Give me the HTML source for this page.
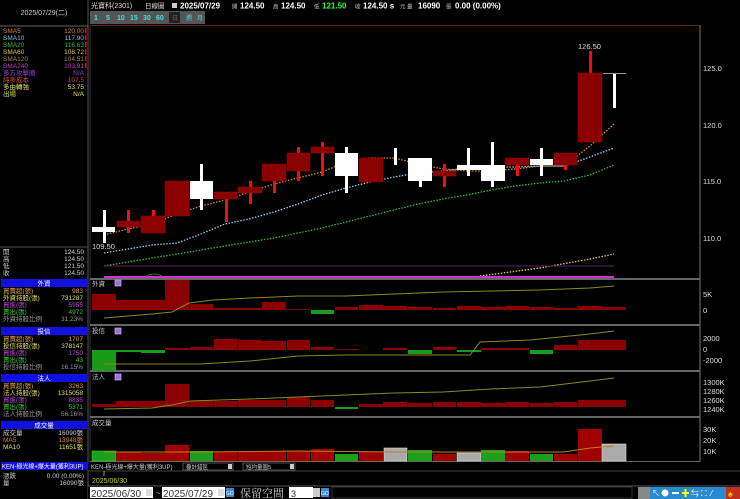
<!DOCTYPE html>
<html><head><meta charset="utf-8"><style>
body{margin:0;background:#000;width:740px;height:499px;overflow:hidden;font-family:"Liberation Sans","Noto Sans CJK TC",sans-serif}
svg{position:absolute;left:0;top:0}
</style></head><body>
<svg width="740" height="499" xmlns="http://www.w3.org/2000/svg" font-family="Liberation Sans, Noto Sans CJK TC, sans-serif">
<rect width="740" height="499" fill="#000"/>
<!-- left panel -->
<rect x="0" y="0" width="88" height="499" fill="#000"/>
<line x1="88" y1="0" x2="88" y2="499" stroke="#555"/>
<text x="44" y="15" fill="#ccc" font-size="7" text-anchor="middle">2025/07/29(二)</text>
<line x1="0" y1="26" x2="88" y2="26" stroke="#666"/>
<g font-size="6.5">
<text x="3" y="33" fill="#e08030">SMA5</text><text x="84" y="33" fill="#e08030" text-anchor="end">120.00</text>
<text x="3" y="40" fill="#80c0e0">SMA10</text><text x="84" y="40" fill="#80c0e0" text-anchor="end">117.90</text>
<text x="3" y="47" fill="#30c030">SMA20</text><text x="84" y="47" fill="#30c030" text-anchor="end">116.63</text>
<text x="3" y="54" fill="#e0d040">SMA60</text><text x="84" y="54" fill="#e0d040" text-anchor="end">108.72</text>
<text x="3" y="61" fill="#b08060">SMA120</text><text x="84" y="61" fill="#b08060" text-anchor="end">104.51</text>
<text x="3" y="68" fill="#c040c0">SMA240</text><text x="84" y="68" fill="#c040c0" text-anchor="end">103.91</text>
<text x="3" y="75" fill="#9040e0">多方攻擊圈</text><text x="84" y="75" fill="#9040e0" text-anchor="end">N/A</text>
<text x="3" y="82" fill="#e04040">純多成本</text><text x="84" y="82" fill="#e04040" text-anchor="end">107.5</text>
<text x="3" y="89" fill="#e0e060">多由轉強</text><text x="84" y="89" fill="#e0e060" text-anchor="end">53.75</text>
<text x="3" y="96" fill="#e0e060">出場</text><text x="84" y="96" fill="#e0e060" text-anchor="end">N/A</text>
</g>
<g fill="#f00"><rect x="85" y="28" width="1.5" height="5"/><rect x="85" y="35" width="1.5" height="5"/><rect x="85" y="42" width="1.5" height="5"/><rect x="85" y="49" width="1.5" height="5"/><rect x="85" y="56" width="1.5" height="5"/><rect x="85" y="63" width="1.5" height="5"/></g>
<line x1="0" y1="247" x2="88" y2="247" stroke="#555"/>
<g font-size="6.5" fill="#ccc">
<text x="3" y="254">開</text><text x="84" y="254" text-anchor="end">124.50</text>
<text x="3" y="261">高</text><text x="84" y="261" text-anchor="end">124.50</text>
<text x="3" y="268">低</text><text x="84" y="268" text-anchor="end">121.50</text>
<text x="3" y="275">收</text><text x="84" y="275" text-anchor="end">124.50</text>
</g>
<g font-size="6.5">
<rect x="1" y="279" width="86" height="8" fill="#1010e0"/><text x="44" y="285.5" fill="#fff" text-anchor="middle">外資</text>
<text x="3" y="293" fill="#e0a040">買賣超(張)</text><text x="83" y="293" fill="#e0a040" text-anchor="end">983</text>
<text x="3" y="300" fill="#e0e060">外資持股(張)</text><text x="83" y="300" fill="#e0e060" text-anchor="end">731287</text>
<text x="3" y="307" fill="#c040e0">買進(張)</text><text x="83" y="307" fill="#c040e0" text-anchor="end">5955</text>
<text x="3" y="314" fill="#30d030">賣出(張)</text><text x="83" y="314" fill="#30d030" text-anchor="end">4972</text>
<text x="3" y="321" fill="#999">外資持股比例</text><text x="83" y="321" fill="#999" text-anchor="end">31.23%</text>
<rect x="1" y="327" width="86" height="8" fill="#1010e0"/><text x="44" y="333.5" fill="#fff" text-anchor="middle">投信</text>
<text x="3" y="341" fill="#e0a040">買賣超(張)</text><text x="83" y="341" fill="#e0a040" text-anchor="end">1707</text>
<text x="3" y="348" fill="#e0e060">投信持股(張)</text><text x="83" y="348" fill="#e0e060" text-anchor="end">378147</text>
<text x="3" y="355" fill="#c040e0">買進(張)</text><text x="83" y="355" fill="#c040e0" text-anchor="end">1750</text>
<text x="3" y="362" fill="#30d030">賣出(張)</text><text x="83" y="362" fill="#30d030" text-anchor="end">43</text>
<text x="3" y="369" fill="#999">投信持股比例</text><text x="83" y="369" fill="#999" text-anchor="end">16.15%</text>
<rect x="1" y="374" width="86" height="8" fill="#1010e0"/><text x="44" y="380.5" fill="#fff" text-anchor="middle">法人</text>
<text x="3" y="388" fill="#e0a040">買賣超(張)</text><text x="83" y="388" fill="#e0a040" text-anchor="end">3263</text>
<text x="3" y="395" fill="#e0e060">法人持股(張)</text><text x="83" y="395" fill="#e0e060" text-anchor="end">1315058</text>
<text x="3" y="402" fill="#c040e0">買進(張)</text><text x="83" y="402" fill="#c040e0" text-anchor="end">8835</text>
<text x="3" y="409" fill="#30d030">賣出(張)</text><text x="83" y="409" fill="#30d030" text-anchor="end">5371</text>
<text x="3" y="416" fill="#999">法人持股比例</text><text x="83" y="416" fill="#999" text-anchor="end">56.16%</text>
<rect x="1" y="421" width="86" height="8" fill="#1010e0"/><text x="44" y="427.5" fill="#fff" text-anchor="middle">成交量</text>
<text x="3" y="435" fill="#ccc">成交量</text><text x="83" y="435" fill="#ccc" text-anchor="end">16090張</text>
<text x="3" y="442" fill="#e08030">MA5</text><text x="83" y="442" fill="#e08030" text-anchor="end">13948張</text>
<text x="3" y="449" fill="#e0e060">MA10</text><text x="83" y="449" fill="#e0e060" text-anchor="end">11651張</text>
<rect x="1" y="462" width="86" height="8" fill="#1010e0"/><text x="2" y="468.5" fill="#fff" font-size="6">KEN-極光線+爆大量(獲利3UP)</text>
<text x="3" y="478" fill="#ccc">漲跌</text><text x="84" y="478" fill="#ccc" text-anchor="end">0.00 (0.00%)</text>
<text x="3" y="485" fill="#ccc">量</text><text x="84" y="485" fill="#ccc" text-anchor="end">16090張</text>
</g>
<!-- top bar -->
<text x="91" y="8" fill="#ddd" font-size="7">光寶科(2301)</text>
<text x="145" y="8" fill="#ddd" font-size="6.5">日線圖</text>
<rect x="172" y="3" width="5" height="5" fill="#ccc"/>
<g font-size="8" font-weight="bold">
<text x="180" y="8.5" fill="#fff">2025/07/29</text>
<text x="232" y="8.5" fill="#ccc" font-size="5.5" font-weight="normal">開</text><text x="240" y="8.5" fill="#fff">124.50</text>
<text x="273" y="8.5" fill="#ccc" font-size="5.5" font-weight="normal">高</text><text x="281" y="8.5" fill="#fff">124.50</text>
<text x="314" y="8.5" fill="#ccc" font-size="5.5" font-weight="normal">低</text><text x="322" y="8.5" fill="#3f3">121.50</text>
<text x="355" y="8.5" fill="#ccc" font-size="5.5" font-weight="normal">收</text><text x="363" y="8.5" fill="#fff">124.50 s</text>
<text x="400" y="8.5" fill="#ccc" font-size="5.5" font-weight="normal">元  量</text><text x="418" y="8.5" fill="#fff">16090</text>
<text x="446" y="8.5" fill="#ccc" font-size="5.5" font-weight="normal">張</text><text x="455" y="8.5" fill="#fff">0.00 (0.00%)</text>
</g>
<rect x="90" y="11" width="115" height="13" fill="#555"/>
<g font-size="7" fill="#40e0e0" font-weight="bold">
<text x="94" y="20">1</text><text x="106" y="20">5</text><text x="117" y="20">10</text><text x="130" y="20">15</text><text x="143" y="20">30</text><text x="156" y="20">60</text>
</g>
<rect x="169" y="12" width="11" height="11" fill="#222"/>
<g font-size="6" fill="#40e0e0"><text x="172" y="20" fill="#666">日</text><text x="186" y="20">週</text><text x="197" y="20">月</text></g>
<!-- chart frame -->
<rect x="90" y="25" width="610" height="437" fill="#000"/>
<line x1="90" y1="25.5" x2="700" y2="25.5" stroke="#602030"/>
<line x1="700" y1="25" x2="700" y2="470" stroke="#777"/>
<line x1="90" y1="25" x2="90" y2="470" stroke="#333"/>
<g stroke="#666" stroke-width="2">
<line x1="90" y1="279" x2="700" y2="279"/><line x1="90" y1="325" x2="700" y2="325"/><line x1="90" y1="371" x2="700" y2="371"/><line x1="90" y1="417" x2="700" y2="417"/><line x1="90" y1="462" x2="700" y2="462"/>
</g>
<!-- axis labels -->
<g fill="#ddd" font-size="7.5">
<text x="703" y="71">125.0</text><text x="703" y="128">120.0</text><text x="703" y="184">115.0</text><text x="703" y="241">110.0</text>
<text x="703" y="297">5K</text><text x="703" y="313">0</text>
<text x="703" y="341">2000</text><text x="703" y="352">0</text><text x="703" y="363">-2000</text>
<text x="703" y="385">1300K</text><text x="703" y="394">1280K</text><text x="703" y="403">1260K</text><text x="703" y="412">1240K</text>
<text x="703" y="432">30K</text><text x="703" y="443">20K</text><text x="703" y="454">10K</text><text x="703" y="470">5</text>
</g>
<!-- MA lines -->
<polyline fill="none" stroke="#e08a30" stroke-width="1.3" stroke-dasharray="1.5,1.5" points="104,235 128,229 152,224 177,214 201,206 225,200 249,192 274,184 298,178 322,172 346,162 370,158 394,158 418,164 443,169 467,171 491,171 515,169 540,166 564,166 590,146 614,124"/>
<polyline fill="none" stroke="#90d0f0" stroke-width="1.3" stroke-dasharray="1.5,1.5" points="104,253 128,249 152,245 177,243 201,234 225,224 249,219 274,212 298,204 322,195 346,188 370,182 394,177 418,173 443,171 467,168 491,167 515,167 540,166 564,166 590,157 614,148"/>
<polyline fill="none" stroke="#30c030" stroke-width="1.3" stroke-dasharray="1.5,1.5" points="104,266 128,262 152,258 177,254 201,250 225,246 249,242 274,238 298,233 322,228 346,222 370,216 394,210 418,204 443,199 467,195 491,190 515,186 540,183 564,181 590,175 614,165"/>
<polyline fill="none" stroke="#e0d040" stroke-width="1.3" stroke-dasharray="1.5,1.5" points="480,276 540,268 590,259 614,254"/>
<line x1="104" y1="266" x2="614" y2="266" stroke="#602060" stroke-width="1"/>
<line x1="104" y1="277" x2="614" y2="277" stroke="#d030d0" stroke-width="2"/>
<path d="M146,276 Q154,272 162,276" stroke="#2a6a3a" fill="none"/>
<!-- candles -->
<g fill="#fff">
<rect x="103" y="210" width="3" height="33"/><rect x="92" y="227" width="23" height="5"/>
<rect x="200" y="164" width="3" height="46"/><rect x="190" y="181" width="23" height="18"/>
<rect x="345" y="147" width="3" height="46"/><rect x="335" y="153" width="23" height="23"/>
<rect x="394" y="148" width="3" height="17"/>
<rect x="419" y="165" width="3" height="22"/><rect x="408" y="158" width="24" height="23"/>
<rect x="467" y="148" width="3" height="28"/><rect x="457" y="165" width="24" height="5"/>
<rect x="491" y="142" width="3" height="45"/><rect x="481" y="165" width="24" height="16"/>
<rect x="540" y="148" width="3" height="28"/><rect x="530" y="159" width="23" height="6"/>
<rect x="613" y="73" width="3" height="35"/>
</g>
<line x1="603" y1="73.5" x2="626" y2="73.5" stroke="#999"/>
<g fill="#f01010">
<rect x="127" y="210" width="3" height="23"/><rect x="152" y="210" width="3" height="6"/>
<rect x="225" y="199" width="3" height="23"/><rect x="249" y="181" width="3" height="23"/>
<rect x="273" y="181" width="3" height="12"/><rect x="297" y="147" width="3" height="34"/>
<rect x="321" y="142" width="3" height="34"/><rect x="370" y="182" width="3" height="0"/>
<rect x="443" y="164" width="3" height="23"/><rect x="516" y="165" width="3" height="11"/>
<rect x="564" y="165" width="3" height="5"/><rect x="589" y="51" width="3" height="22"/>
</g>
<g fill="#8b0000" stroke="#a00000" stroke-width="0.5">
<rect x="117" y="221" width="23" height="6"/><rect x="141" y="216" width="24" height="17"/>
<rect x="165" y="181" width="24" height="35"/><rect x="214" y="192" width="23" height="7"/>
<rect x="238" y="187" width="24" height="6"/><rect x="262" y="164" width="24" height="17"/>
<rect x="287" y="153" width="23" height="18"/><rect x="311" y="147" width="23" height="6"/>
<rect x="359" y="158" width="24" height="24"/><rect x="433" y="171" width="23" height="5"/>
<rect x="505" y="158" width="24" height="7"/><rect x="554" y="153" width="23" height="12"/>
<rect x="578" y="73" width="24" height="69"/>
</g>
<text x="92" y="249" fill="#ddd" font-size="7.5">109.50</text>
<text x="578" y="49" fill="#ddd" font-size="7.5">126.50</text>
<!-- sub panel labels -->
<g font-size="6.5" fill="#ccc"><text x="92" y="286">外資</text><text x="92" y="333">投信</text><text x="92" y="379">法人</text><text x="92" y="425">成交量</text></g>
<g fill="#a070e0" stroke="#e0c0ff" stroke-width="0.6"><rect x="115" y="280" width="6" height="6"/><rect x="115" y="328" width="6" height="6"/><rect x="115" y="374" width="6" height="6"/></g>
<!-- 外資 bars zero 310 -->
<g fill="#8b0000">
<rect x="92" y="294" width="24" height="16"/><rect x="116" y="300" width="25" height="10"/><rect x="141" y="300" width="24" height="10"/><rect x="165" y="280" width="24" height="30"/><rect x="190" y="304" width="23" height="6"/><rect x="214" y="308" width="23" height="2"/><rect x="238" y="308" width="24" height="2"/><rect x="262" y="302" width="24" height="8"/><rect x="287" y="309" width="23" height="1"/><rect x="335" y="307" width="23" height="3"/><rect x="359" y="305" width="24" height="5"/><rect x="383" y="306" width="24" height="4"/><rect x="408" y="307" width="24" height="3"/><rect x="433" y="308" width="23" height="2"/><rect x="457" y="306" width="24" height="4"/><rect x="481" y="307" width="24" height="3"/><rect x="505" y="306" width="24" height="4"/><rect x="530" y="307" width="23" height="3"/><rect x="554" y="308" width="23" height="2"/><rect x="578" y="306" width="24" height="4"/><rect x="602" y="307" width="24" height="3"/>
</g>
<rect x="311" y="310" width="23" height="4" fill="#1a9a1a"/>
<polyline fill="none" stroke="#8a8a20" points="104,318 128,316 152,314 172,312 189,303 213,300 250,298 298,296 346,296 394,294 443,292 491,291 540,290 590,288 614,286"/>
<!-- 投信 zero 350 -->
<g fill="#1a9a1a"><rect x="92" y="350" width="24" height="21"/><rect x="116" y="350" width="25" height="2"/><rect x="141" y="350" width="24" height="3"/><rect x="408" y="350" width="24" height="4"/><rect x="530" y="350" width="23" height="4"/><rect x="457" y="350" width="24" height="2"/></g>
<g fill="#8b0000"><rect x="165" y="348" width="24" height="2"/><rect x="190" y="347" width="23" height="3"/><rect x="214" y="339" width="23" height="11"/><rect x="238" y="340" width="24" height="10"/><rect x="262" y="341" width="24" height="9"/><rect x="287" y="340" width="23" height="10"/><rect x="311" y="347" width="23" height="3"/><rect x="335" y="349" width="23" height="1"/><rect x="383" y="348" width="24" height="2"/><rect x="433" y="347" width="23" height="3"/><rect x="481" y="348" width="24" height="2"/><rect x="505" y="348" width="24" height="2"/><rect x="554" y="345" width="23" height="5"/><rect x="578" y="340" width="24" height="10"/><rect x="602" y="340" width="24" height="10"/></g>
<polyline fill="none" stroke="#8a8a20" points="104,364 200,364 250,361 298,356 346,355 394,355 443,355 470,355 480,342 530,340 590,334 614,331"/>
<!-- 法人 zero 407 -->
<g fill="#8b0000"><rect x="92" y="404" width="24" height="3"/><rect x="116" y="401" width="25" height="6"/><rect x="141" y="401" width="24" height="6"/><rect x="165" y="384" width="24" height="23"/><rect x="190" y="401" width="23" height="6"/><rect x="214" y="401" width="23" height="6"/><rect x="238" y="400" width="24" height="7"/><rect x="262" y="400" width="24" height="7"/><rect x="287" y="397" width="23" height="10"/><rect x="311" y="400" width="23" height="7"/><rect x="359" y="404" width="24" height="3"/><rect x="383" y="402" width="24" height="5"/><rect x="408" y="403" width="24" height="4"/><rect x="433" y="402" width="23" height="5"/><rect x="457" y="402" width="24" height="5"/><rect x="481" y="403" width="24" height="4"/><rect x="505" y="402" width="24" height="5"/><rect x="530" y="403" width="23" height="4"/><rect x="554" y="402" width="23" height="5"/><rect x="578" y="400" width="24" height="7"/><rect x="602" y="400" width="24" height="7"/></g>
<rect x="335" y="407" width="23" height="2" fill="#1a9a1a"/>
<polyline fill="none" stroke="#8a8a20" points="104,409 152,408 172,405 190,401 250,399 298,397 346,395 394,393 443,392 491,389 540,387 590,381 614,378"/>
<!-- volume base 461 -->
<g stroke-width="0.6">
<rect x="92" y="451" width="24" height="10" fill="#1aa01a" stroke="#3c3"/>
<rect x="116" y="452" width="25" height="9" fill="#a00000"/>
<rect x="141" y="453" width="24" height="8" fill="#a00000"/>
<rect x="165" y="445" width="24" height="16" fill="#a00000"/>
<rect x="190" y="451" width="23" height="10" fill="#1aa01a"/>
<rect x="214" y="452" width="23" height="9" fill="#a00000"/>
<rect x="238" y="452" width="24" height="9" fill="#a00000"/>
<rect x="262" y="451" width="24" height="10" fill="#a00000"/>
<rect x="287" y="451" width="23" height="10" fill="#a00000"/>
<rect x="311" y="449" width="23" height="12" fill="#a00000"/>
<rect x="335" y="454" width="23" height="7" fill="#1aa01a"/>
<rect x="359" y="452" width="24" height="9" fill="#a00000"/>
<rect x="384" y="448" width="23" height="13" fill="#aaa" stroke="#ddd"/>
<rect x="408" y="450" width="24" height="11" fill="#1aa01a"/>
<rect x="433" y="454" width="23" height="7" fill="#a00000"/>
<rect x="457" y="453" width="24" height="8" fill="#aaa" stroke="#ddd"/>
<rect x="481" y="450" width="24" height="11" fill="#1aa01a"/>
<rect x="505" y="451" width="24" height="10" fill="#a00000"/>
<rect x="530" y="454" width="23" height="7" fill="#1aa01a"/>
<rect x="554" y="454" width="23" height="7" fill="#a00000"/>
<rect x="578" y="429" width="24" height="32" fill="#a00000"/>
<rect x="602" y="444" width="24" height="17" fill="#aaa" stroke="#ddd"/>
</g>
<polyline fill="none" stroke="#c08020" points="104,452 200,452 298,451 394,452 491,452 564,452 590,448 614,446"/>
<!-- bottom indicator row -->
<rect x="88" y="462" width="652" height="9" fill="#000"/>
<text x="91" y="469" fill="#ccc" font-size="6">KEN-極光線+爆大量(獲利3UP)</text>
<rect x="183" y="463" width="50" height="7" fill="#000" stroke="#888" stroke-width="0.6"/><text x="186" y="469" fill="#ccc" font-size="5.5">疊計錯區</text><rect x="228" y="464" width="4" height="5" fill="#ccc"/>
<rect x="243" y="463" width="52" height="7" fill="#000" stroke="#888" stroke-width="0.6"/><text x="246" y="469" fill="#ccc" font-size="5.5">短均量圖5</text><rect x="290" y="464" width="4" height="5" fill="#ccc"/>
<line x1="88" y1="471" x2="740" y2="471" stroke="#444"/>
<line x1="104" y1="471" x2="104" y2="476" stroke="#aa0"/>
<text x="92" y="483" fill="#cc0" font-size="7">2025/06/30</text>
<!-- controls -->
<rect x="88" y="486" width="652" height="13" fill="#000"/>
<line x1="88" y1="486" x2="740" y2="486" stroke="#555"/>
<rect x="90" y="487" width="63" height="11" fill="#fff"/><text x="91" y="497" fill="#333" font-size="10">2025/06/30</text><rect x="146" y="489" width="6" height="7" fill="#ddd"/>
<text x="156" y="496" fill="#ccc" font-size="8">~</text>
<rect x="162" y="487" width="63" height="11" fill="#fff"/><text x="163" y="497" fill="#333" font-size="10">2025/07/29</text><rect x="218" y="489" width="6" height="7" fill="#ddd"/>
<rect x="226" y="488" width="8" height="9" fill="#3b8ad8"/><text x="226" y="495" fill="#fff" font-size="5">GO</text>
<text x="240" y="497" fill="#ccc" font-size="11" font-family="Noto Serif CJK SC, serif">保留空間</text>
<rect x="289" y="487" width="24" height="11" fill="#fff"/><text x="291" y="497" fill="#333" font-size="9">3</text><rect x="313" y="488" width="7" height="9" fill="#ccc"/>
<rect x="321" y="488" width="8" height="9" fill="#3b8ad8"/><text x="321" y="495" fill="#fff" font-size="5">GO</text>
<rect x="332" y="487" width="300" height="11" fill="#000" stroke="#555" stroke-width="0.6"/>
<rect x="638" y="487" width="12" height="12" fill="#888"/>
<rect x="650" y="487" width="90" height="12" fill="#2a8ad0"/>
<g fill="#fff" font-size="8"><text x="652" y="496">↖</text><circle cx="665" cy="493" r="3.5"/><rect x="672" y="492" width="7" height="2"/><rect x="682" y="492" width="7" height="2" fill="#ff0"/><rect x="684.5" y="489" width="2" height="8" fill="#ff0"/><text x="691" y="496">⇆</text><text x="701" y="496">⛶</text><text x="711" y="496">⁄</text></g>
<rect x="726" y="487" width="14" height="12" fill="#c03020"/><text x="728" y="497" fill="#ffcc00" font-size="9">♠</text>
</svg>
</body></html>
